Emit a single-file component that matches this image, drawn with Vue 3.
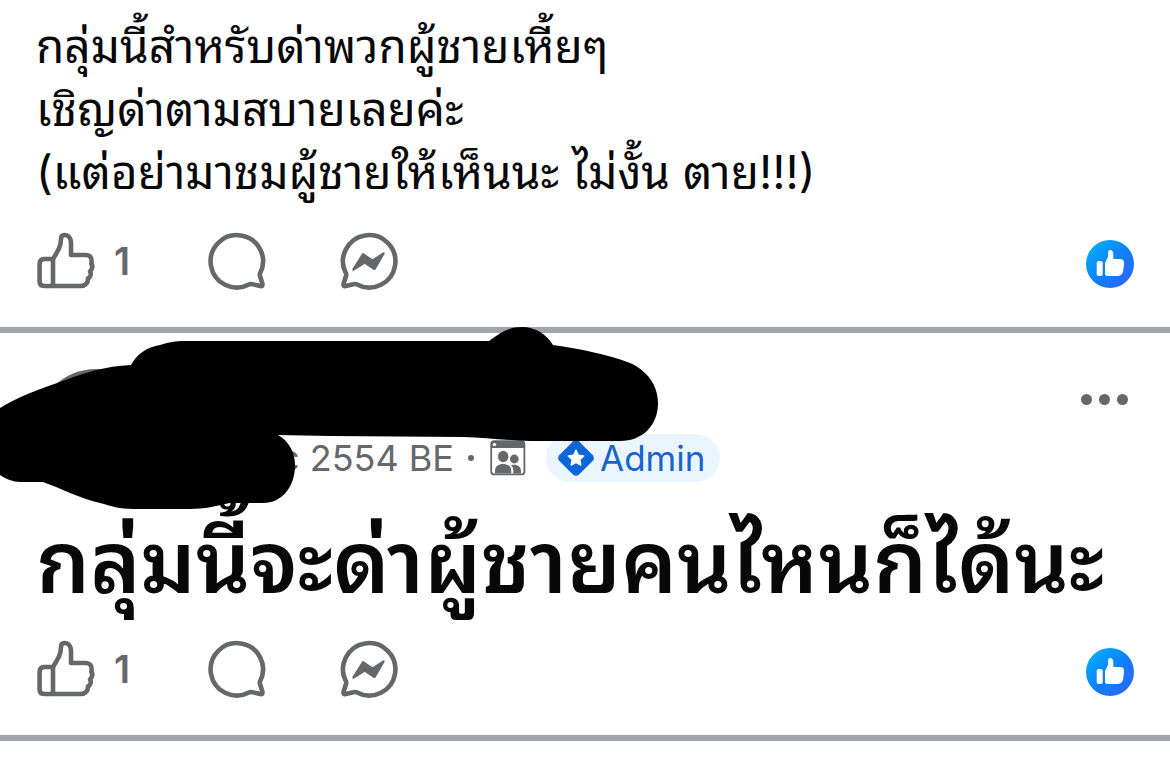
<script setup>
const posts = [
  {
    id: 1,
    lines: ['กลุ่มนี้สำหรับด่าพวกผู้ชายเหี้ยๆ', 'เชิญด่าตามสบายเลยค่ะ', '(แต่อย่ามาชมผู้ชายให้เห็นนะ ไม่งั้น ตาย!!!)'],
    likes: 1,
  },
  { id: 2, header: true, title: 'กลุ่มนี้จะด่าผู้ชายคนไหนก็ได้นะ', likes: 1 },
]
</script>

<template>
  <main class="feed">
    <article v-for="post in posts" :key="post.id" class="post">
      <header v-if="post.header" class="head">
        <div class="avatar"></div>
        <div class="meta">
          <span class="date">c 2554 BE</span>
          <span class="dot"></span>
          <svg class="group" viewBox="0 0 36 36" aria-hidden="true">
            <rect x="1.2" y="1.2" width="33.2" height="33.2" rx="3" fill="#fff" stroke="#65676b" stroke-width="1.8" />
            <path d="M1 8V3.500Q1 1 3.500 1H32Q34.500 1 34.500 3.500V8Z" fill="#65676b" />
            <circle cx="4.500" cy="4.600" r="1.700" fill="#fff" />
            <g fill="#65676b">
              <ellipse cx="13.200" cy="16.500" rx="5.200" ry="5.800" />
              <circle cx="24.300" cy="19" r="4.400" />
              <path d="M5 33.500V31C5 26 8.500 24 13.200 24S21.200 26 21.200 31V33.500Z" />
              <path d="M21 25.300C26 23.800 31 26 31 31V33.500H23.300V31C23.300 28.500 22.500 26.500 21 25.300Z" />
            </g>
          </svg>
          <span class="badge">
            <svg viewBox="0 0 36 36" aria-hidden="true">
              <path d="M15.200 1.200Q18-1 20.800 1.200L34.800 15.200Q37 18 34.800 20.800L20.800 34.800Q18 37 15.200 34.800L1.200 20.800Q-1 18 1.200 15.200Z" fill="#0866d8" />
              <path d="M18 10.300L20.300 15.200 25.700 15.900 21.700 19.600 22.800 25 18 22.300 13.200 25 14.300 19.600 10.300 15.900 15.700 15.200Z" fill="#fff" stroke="#fff" stroke-width="1.500" stroke-linejoin="round" />
            </svg>
            Admin
          </span>
        </div>
        <button class="more" aria-label="More options"><i></i><i></i><i></i></button>
        <svg class="redaction" viewBox="0 0 660 184" aria-hidden="true">
          <path d="M0 81C18 70 39 62 60 55C83 46 106 39 131 38C137 27 147 20 160 18C170 15 175 14 185 14H489C501 5 509 0 522 0C536 0 547 8 553 18C580 22 607 27 630 36C648 44 658 59 658 76C658 98 643 114 620 114H530C507 113 485 111 463 110L330 109L278 108C289 114 295 126 295 138C295 160 282 176 263 176H230C216 179 204 182 190 182H133C120 182 111 179 100 176C79 171 60 161 43 155H20C13 155 6 152 0 148Z" />
        </svg>
      </header>

      <h2 v-if="post.title" class="title">{{ post.title }}</h2>
      <div v-else class="body">
        <p v-for="line in post.lines" :key="line">{{ line }}</p>
      </div>

      <footer class="actions">
        <button class="act like" aria-label="Like">
          <svg viewBox="0 0 60 60" fill="none" stroke="#65676b" stroke-width="4.600" stroke-linejoin="round" stroke-linecap="round" aria-hidden="true">
            <path d="M17 28H8.500Q3.600 28 3.600 33V50.500Q3.600 55 8.500 55H45C49 55 52.300 52 52 47.500C54.500 46 55.500 43 54 40.500C56.300 38 56.800 35 55.300 33C56.500 27.500 54.500 24 49.500 24H35V12C35 7 32.500 4 28.500 4C25.500 4 25 6 25 8C25 15 22.500 19 17 28Z" />
            <path d="M17 28V55" />
          </svg>
          <span>{{ post.likes }}</span>
        </button>
        <button class="act comment" aria-label="Comment">
          <svg viewBox="0 0 60 60" fill="none" stroke="#65676b" stroke-width="4.600" stroke-linejoin="round" aria-hidden="true">
            <path d="M53 42.500A26.200 26.200 0 1 0 42 53.500Q43.500 52.700 45.500 53.200L53.500 55Q55.700 55.500 55.500 53L53 45Q52.500 43.500 53 42.500Z" />
          </svg>
        </button>
        <button class="act send" aria-label="Send in Messenger">
          <svg viewBox="0 0 60 60" fill="none" stroke="#65676b" stroke-width="4.600" stroke-linejoin="round" aria-hidden="true">
            <path d="M7 42.500A26.200 26.200 0 1 1 18 53.500Q16.500 52.700 14.500 53.200L6.500 55Q4.300 55.500 4.500 53L7 45Q7.500 43.500 7 42.500Z" />
            <path d="M14.500 38.500L24 23.300L33.500 29.800L44.500 22.500L35.500 38L25.700 31.500Z" fill="#65676b" stroke-width="2.400" />
          </svg>
        </button>
        <svg class="reaction" viewBox="0 0 48 48" role="img" aria-label="Liked">
          <defs>
            <linearGradient :id="'blue' + post.id" x1="0" y1="0" x2="1" y2="1">
              <stop offset="0.100" stop-color="#02adfc" />
              <stop offset="0.500" stop-color="#0e81fb" />
              <stop offset="0.900" stop-color="#2b66f8" />
            </linearGradient>
          </defs>
          <circle cx="24" cy="24" r="24" :fill="`url(#blue${post.id})`" />
          <rect x="10.700" y="21" width="6" height="15" rx="2" fill="#fff" />
          <path d="M19 34V23.500C19 21.500 21.800 19 22.200 15.500V12C22.200 9 27.300 9 27.300 14V19H34C37 19 38.500 21 38 24L37.200 31C36.500 34.500 34.500 36 31 36H21Q19 36 19 34Z" fill="#fff" />
        </svg>
      </footer>
    </article>
  </main>
</template>

<style>
body {
  margin: 0;
  background: #fff;
}
</style>

<style scoped>
.feed {
  font-family: Inter, Thonburi, "Noto Sans Thai Looped", "Noto Looped Thai", Loma, Garuda, Waree, "Noto Sans Thai", "Noto Sans", sans-serif;
  color: #080809;
  overflow: hidden;
}
.post {
  padding: 15px 36px 36px;
  border-bottom: 6px solid #a3a4ac;
}
.body p {
  margin: 0;
  font-size: 46px;
  line-height: 63px;
  white-space: nowrap;
}
.head {
  position: relative;
  display: flex;
  align-items: flex-end;
  height: 120px;
  padding: 21px 0 0;
}
.avatar {
  width: 120px;
  height: 120px;
  border-radius: 50%;
  background: #666;
}
.meta {
  display: flex;
  align-items: center;
  margin: 0 auto 7px 123px;
  color: #65676b;
  font-size: 36px;
  line-height: 48px;
  white-space: nowrap;
}
.dot {
  width: 6px;
  height: 6px;
  margin: 0 16px 0 14px;
  border-radius: 50%;
  background: #65676b;
}
.group {
  width: 36px;
  height: 36px;
}
.badge {
  display: flex;
  align-items: center;
  gap: 6px;
  margin-left: 20px;
  padding: 0 15px 0 12px;
  border-radius: 24px;
  background: #ebf5ff;
  color: #1763cf;
  font-size: 35px;
}
.badge svg {
  width: 36px;
  height: 36px;
}
button {
  padding: 0;
  border: 0;
  background: none;
  font: inherit;
}
.more {
  display: flex;
  gap: 7px;
  margin: 0 6px 84px 0;
}
.more i {
  width: 11px;
  height: 11px;
  border-radius: 50%;
  background: #65676b;
}
.redaction {
  position: absolute;
  top: -21px;
  left: -36px;
  width: 660px;
  height: 184px;
}
.title {
  margin: 0;
  padding: 24px 0 15px;
  font-size: 85px;
  font-weight: 600;
  line-height: 99px;
  white-space: nowrap;
}
.actions {
  display: flex;
  align-items: center;
  height: 60px;
  margin-top: 27px;
}
.title + .actions {
  margin-top: 12px;
}
.act {
  display: flex;
  align-items: center;
  color: #65676b;
  font-size: 38px;
  font-weight: 600;
  line-height: 48px;
}
.act svg {
  width: 60px;
  height: 60px;
}
.like {
  gap: 18px;
  width: 171px;
}
.send {
  margin-left: 72px;
}
.reaction {
  width: 48px;
  height: 48px;
  margin: 6px 0 0 auto;
}
</style>
